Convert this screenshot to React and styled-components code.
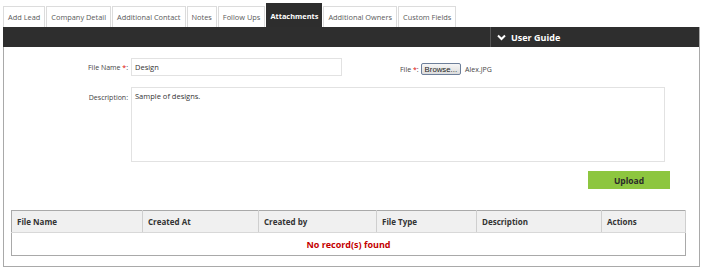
import React from "react";
import styled, { createGlobalStyle } from "styled-components";

const GlobalStyle = createGlobalStyle`
  body {
    margin: 0;
    background: #fff;
    font-family: "Open Sans", "Liberation Sans", sans-serif;
    color: #333;
  }
`;

const Page = styled.div`
  width: 697px;
  padding-left: 3px;
`;

const TabBar = styled.div`
  display: flex;
  align-items: flex-end;
  height: 27px;
`;

const Tab = styled.div`
  box-sizing: border-box;
  height: ${p => (p.$active ? "24px" : "21px")};
  padding: 0 ${p => (p.$active ? "3px" : "4px")};
  margin-right: 1px;
  display: flex;
  align-items: center;
  border: 1px solid ${p => (p.$active ? "#2d2d2d" : "#dcdcdc")};
  border-bottom: none;
  background: ${p => (p.$active ? "#2d2d2d" : "#fff")};
  color: ${p => (p.$active ? "#fff" : "#5a5a5a")};
  font-size: 7.4px;
  font-weight: ${p => (p.$active ? 700 : 400)};
  white-space: nowrap;
`;

const Panel = styled.div`
  box-sizing: border-box;
  height: 240px;
  border: 1px solid #a9a9a9;
  border-top: none;
`;

const HeaderBar = styled.div`
  height: 20px;
  background: #2e2e2e;
  display: flex;
  justify-content: flex-end;
  margin-left: -1px;
`;

const GuideToggle = styled.div`
  width: 202px;
  border-left: 1px solid #555;
  display: flex;
  align-items: center;
  gap: 5px;
  padding-left: 6px;
  color: #fff;
  font-size: 9px;
  font-weight: 700;
`;

const Form = styled.div`
  padding-top: 11px;
`;

const FormRow = styled.div`
  display: flex;
  align-items: ${p => (p.$top ? "flex-start" : "center")};
  margin-bottom: ${p => p.$gap || 0}px;
`;

const Label = styled.label`
  width: 124px;
  padding-right: 3px;
  text-align: right;
  font-size: 7px;
  color: #444;
  padding-top: ${p => p.$offset || 0}px;
  flex-shrink: 0;
`;

const Req = styled.span`
  color: #d00;
`;

const TextInput = styled.div`
  box-sizing: border-box;
  width: 211px;
  height: 18px;
  border: 1px solid #e2e2e2;
  padding: 0 3px;
  display: flex;
  align-items: center;
  font-size: 7.5px;
  color: #333;
`;

const FileGroup = styled.div`
  display: flex;
  align-items: center;
  margin-left: 58px;
  margin-top: 4px;
  font-size: 7px;
  color: #444;
  white-space: pre;
`;

const BrowseButton = styled.div`
  box-sizing: border-box;
  height: 12px;
  margin: 0 4px 0 2px;
  padding: 0 3px;
  display: flex;
  align-items: center;
  border: 1px solid #6d7f9a;
  border-radius: 2px;
  background: linear-gradient(#f6f6f6, #dcdcdc);
  font-family: "Liberation Sans", Arial, sans-serif;
  font-size: 7.8px;
  color: #222;
`;

const TextArea = styled.div`
  box-sizing: border-box;
  width: 534px;
  height: 75px;
  border: 1px solid #e2e2e2;
  padding: 3px 3px;
  font-size: 7.5px;
  color: #333;
`;

const ActionRow = styled.div`
  display: flex;
  justify-content: flex-end;
  padding-right: 29px;
  margin-top: 9px;
`;

const UploadButton = styled.div`
  width: 82px;
  height: 18px;
  background: #8dc63f;
  display: flex;
  align-items: center;
  justify-content: center;
  color: #2a2a2a;
  font-size: 8.5px;
  font-weight: 700;
`;

const Table = styled.table`
  margin: 21px 0 0 7px;
  width: 674px;
  border-collapse: collapse;
  border: 1px solid #a9a9a9;
  table-layout: fixed;
  font-size: 8px;
`;

const HeadCell = styled.th`
  height: 21px;
  padding: 0 5px;
  background: #f0f0f0;
  border-right: 1px solid #cfcfcf;
  border-bottom: 1px solid #d8d8d8;
  text-align: left;
  font-weight: 700;
  color: #333;
`;

const EmptyCell = styled.td`
  height: 20px;
  text-align: center;
  color: #c40000;
  font-size: 9px;
  font-weight: 700;
`;

const columns = [
  { label: "File Name", width: 131 },
  { label: "Created At", width: 116 },
  { label: "Created by", width: 118 },
  { label: "File Type", width: 100 },
  { label: "Description", width: 125 },
  { label: "Actions", width: 84 },
];

const tabs = [
  "Add Lead",
  "Company Detail",
  "Additional Contact",
  "Notes",
  "Follow Ups",
  "Attachments",
  "Additional Owners",
  "Custom Fields",
];

function Chevron() {
  return (
    <svg width="9" height="7" viewBox="0 0 9 7">
      <path d="M1 1.5 L4.5 5 L8 1.5" fill="none" stroke="#fff" strokeWidth="2" />
    </svg>
  );
}

export default function App() {
  return (
    <Page>
      <GlobalStyle />
      <TabBar>
        {tabs.map(t => (
          <Tab key={t} $active={t === "Attachments"}>{t}</Tab>
        ))}
      </TabBar>
      <Panel>
        <HeaderBar>
          <GuideToggle>
            <Chevron /> User Guide
          </GuideToggle>
        </HeaderBar>
        <Form>
          <FormRow $gap={11}>
            <Label>File Name <Req>*</Req>:</Label>
            <TextInput>Design</TextInput>
            <FileGroup>
              {"File "}<Req>*</Req>:
              <BrowseButton>Browse...</BrowseButton>
              Alex.JPG
            </FileGroup>
          </FormRow>
          <FormRow $top>
            <Label $offset={6}>Description:</Label>
            <TextArea>Sample of designs.</TextArea>
          </FormRow>
          <ActionRow>
            <UploadButton>Upload</UploadButton>
          </ActionRow>
        </Form>
        <Table>
          <colgroup>
            {columns.map(c => <col key={c.label} style={{ width: c.width }} />)}
          </colgroup>
          <thead>
            <tr>
              {columns.map(c => <HeadCell key={c.label}>{c.label}</HeadCell>)}
            </tr>
          </thead>
          <tbody>
            <tr>
              <EmptyCell colSpan={6}>No record(s) found</EmptyCell>
            </tr>
          </tbody>
        </Table>
      </Panel>
    </Page>
  );
}
